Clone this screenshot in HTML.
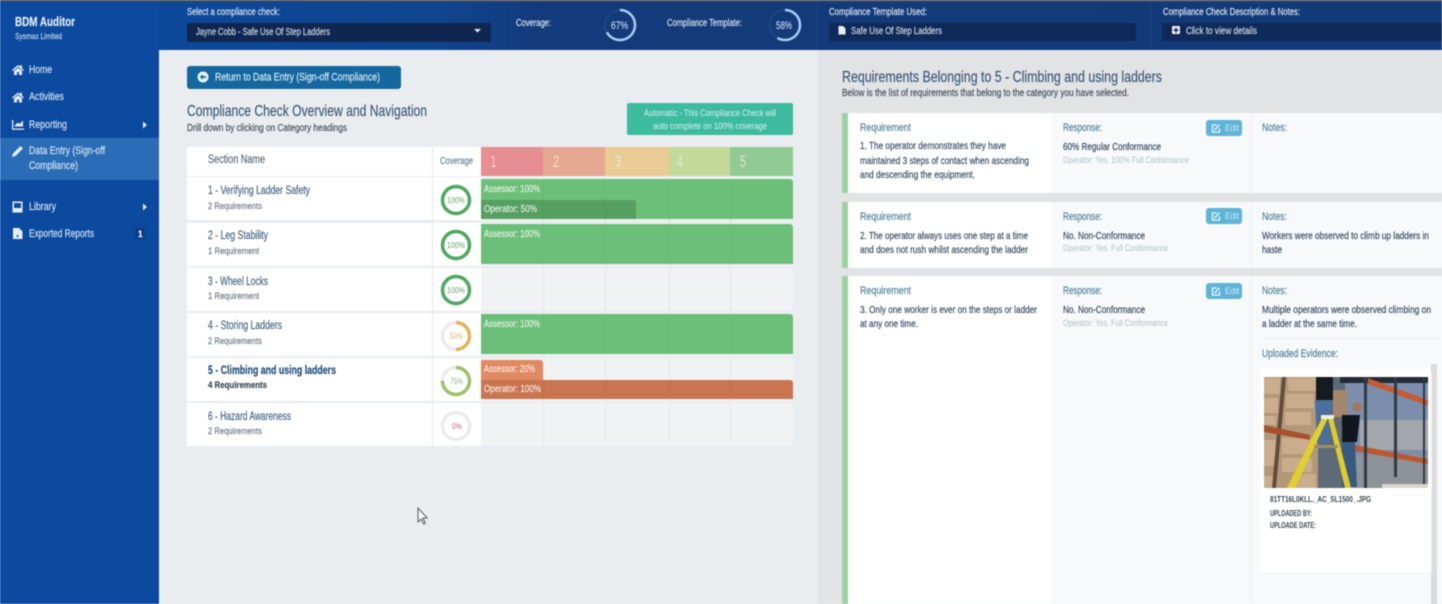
<!DOCTYPE html>
<html><head><meta charset="utf-8"><title>BDM Auditor</title>
<style>
html,body{margin:0;padding:0;background:#e9edef;width:1442px;height:604px;overflow:hidden}
svg{display:block;filter:blur(.4px)}
text{font-family:"Liberation Sans",sans-serif;font-size:10px;fill:var(--c);stroke:var(--c);stroke-width:.16}
.s{--c:#d5e3f3;font-size:11px}.h{--c:#dbe6f3;font-size:10px}.d{--c:#33475f;font-size:10.5px}
.t{--c:#41607f;font-size:11.5px}.q{--c:#6b7680;font-size:9.5px}
.b{--c:#e6f2e8;font-size:10px}.l{--c:#4f7f96;font-size:11px}.g{--c:#b4bec2;font-size:9.5px;stroke-width:0}
.n{--c:#f6e9e4;font-size:16.5px;opacity:.8;stroke-width:0}
.w{--c:#d5dfea;font-size:10.5px}
.bb{font-weight:bold}
.ev{--c:#3a4650;font-size:8px;font-weight:bold;stroke-width:0}
</style></head><body>
<svg xmlns="http://www.w3.org/2000/svg" width="1442" height="604" viewBox="0 0 1442 604">
<defs>
<linearGradient id="hd" x1="0" x2="1" y1="0" y2="0"><stop offset="0" stop-color="#0b4a9e"/><stop offset=".3" stop-color="#0f4590"/><stop offset=".38" stop-color="#133a7a"/><stop offset="1" stop-color="#133a78"/></linearGradient>
</defs>
<rect width="1442" height="604" fill="#e9edef"/>
<rect x="818" y="50" width="624" height="554" fill="#e1e3e5"/>
<rect width="1442" height="50" fill="url(#hd)"/>
<rect width="1442" height="2" fill="#3c4a63"/>
<rect x="0" y="0" width="159" height="604" fill="#0b4a9e"/>
<rect width="159" height="2" fill="#3c4a63"/>
<rect x="505" y="2" width="1" height="48" fill="#173f7e"/><rect x="655" y="2" width="1" height="48" fill="#173f7e"/><rect x="816" y="2" width="1" height="48" fill="#1a4486"/><rect x="1150" y="2" width="1" height="48" fill="#1a4486"/>

<!-- Sidebar -->
<rect x="0" y="138" width="159" height="42" fill="#2a6db6"/>
<g fill="#e4edf7">
<path d="M12 70l6-5 2 1.700v-1.500h2v3l2 2-1 .8-5-4.200-5 4.200zM14 71l4-3.300 4 3.300v4h-3v-3h-2v3h-3z"/>
<path d="M12 97.500l6-5 2 1.700v-1.500h2v3l2 2-1 .8-5-4.200-5 4.200zM14 98.500l4-3.300 4 3.300v4h-3v-3h-2v3h-3z"/>
<path d="M12 120h1.300v8.500H24v1.300H12zM14.500 126l3-3.500 2 1.500 3.500-3.500v6h-8.500z"/>
<path d="M12 157l1-3.500 7.500-7.500 2.500 2.500-7.500 7.500z"/>
<path d="M12.500 201.500h10v11h-10zM14 203v5h7v-5z"/>
<path d="M13 228h6l3.500 3.500V239H13z"/>
</g>
<circle cx="17.500" cy="236" r="1" fill="#0b4a9e"/>
<path d="M143 121.500l4 3.500-4 3.500zM143 203.500l4 3.500-4 3.500z" fill="#dce8f5"/>
<rect x="135" y="228" width="10" height="11" rx="3" fill="#0d3a7c"/>
<g transform="translate(0,-.8)">
<text x="15" y="27" style="--c:#e4edf7;font-size:12.500px;font-weight:bold" textLength="60" lengthAdjust="spacingAndGlyphs">BDM Auditor</text>
<text x="15" y="40" style="--c:#c5d6ea;font-size:8.500px" textLength="47" lengthAdjust="spacingAndGlyphs">Sysmax Limited</text>
<text x="29" y="74" class="s" textLength="23" lengthAdjust="spacingAndGlyphs">Home</text>
<text x="29" y="101" class="s" textLength="35" lengthAdjust="spacingAndGlyphs">Activities</text>
<text x="29" y="129" class="s" textLength="38" lengthAdjust="spacingAndGlyphs">Reporting</text>
<text x="29" y="155" class="s" textLength="76" lengthAdjust="spacingAndGlyphs">Data Entry (Sign-off</text>
<text x="29" y="170" class="s" textLength="49" lengthAdjust="spacingAndGlyphs">Compliance)</text>
<text x="29" y="211" class="s" textLength="27" lengthAdjust="spacingAndGlyphs">Library</text>
<text x="29" y="238" class="s" textLength="65" lengthAdjust="spacingAndGlyphs">Exported Reports</text>
<text x="137.800" y="238" style="--c:#e4edf7;font-size:9px;font-weight:bold">1</text>

<!-- Header text -->
<text x="187" y="16" class="h" textLength="93" lengthAdjust="spacingAndGlyphs">Select a compliance check:</text>
<text x="516" y="27" class="h" textLength="35" lengthAdjust="spacingAndGlyphs">Coverage:</text>
<text x="667" y="27" class="h" textLength="75" lengthAdjust="spacingAndGlyphs">Compliance Template:</text>
<text x="829" y="16" class="h" textLength="98" lengthAdjust="spacingAndGlyphs">Compliance Template Used:</text>
<text x="1163" y="16" class="h" textLength="137" lengthAdjust="spacingAndGlyphs">Compliance Check Description &amp; Notes:</text>
</g>
<rect x="187" y="23" width="304" height="19" rx="2" fill="#0e2650"/>
<text x="196" y="35" class="w" textLength="134" lengthAdjust="spacingAndGlyphs">Jayne Cobb - Safe Use Of Step Ladders</text>
<path d="M474 29h7l-3.500 3.500z" fill="#e8eef5"/>
<circle cx="620" cy="25" r="15" fill="none" stroke="#1c4484" stroke-width="2.500"/>
<circle cx="620" cy="25" r="15" fill="none" stroke="#a9cdf0" stroke-width="2.500" stroke-dasharray="63 95" transform="rotate(-90 620 25)"/>
<text x="611" y="29" style="--c:#c7d8ec;font-size:11px" textLength="17" lengthAdjust="spacingAndGlyphs">67%</text>
<circle cx="785" cy="25" r="15" fill="none" stroke="#1c4484" stroke-width="2.500"/>
<circle cx="785" cy="25" r="15" fill="none" stroke="#a9cdf0" stroke-width="2.500" stroke-dasharray="55 95" transform="rotate(-90 785 25)"/>
<text x="776" y="29" style="--c:#c7d8ec;font-size:11px" textLength="16" lengthAdjust="spacingAndGlyphs">58%</text>
<rect x="829" y="23" width="307" height="18" fill="#0f2a58"/>
<path d="M838.500 26h4.500l2.500 2.500V34.500h-7z" fill="#e8eef5"/>
<text x="851" y="34" class="w" textLength="91" lengthAdjust="spacingAndGlyphs">Safe Use Of Step Ladders</text>
<rect x="1162" y="23" width="280" height="18" fill="#0f2a58"/>
<rect x="1172" y="26" width="8" height="8" rx="1" fill="#f2f5f8"/><path d="M1175.300 27.500h1.400v2h2v1.400h-2v2h-1.400v-2h-2v-1.400h2z" fill="#0f2a58"/>
<text x="1186" y="34" class="w" textLength="71" lengthAdjust="spacingAndGlyphs">Click to view details</text>

<!-- Left panel -->
<rect x="187" y="66" width="214" height="23" rx="3" fill="#14689f"/>
<circle cx="203" cy="77" r="5.500" fill="#eaf3f9"/><path d="M199.800 77l3-2.700v1.800h3.200v1.800h-3.200v1.800z" fill="#14689f"/>
<text x="215" y="80.500" style="--c:#dcebf5;font-size:11px" textLength="165" lengthAdjust="spacingAndGlyphs">Return to Data Entry (Sign-off Compliance)</text>
<text x="187" y="116" style="--c:#3d5877;font-size:16px" textLength="240" lengthAdjust="spacingAndGlyphs">Compliance Check Overview and Navigation</text>
<text x="187" y="131" style="--c:#3f4c58;font-size:10px" textLength="160" lengthAdjust="spacingAndGlyphs">Drill down by clicking on Category headings</text>
<rect x="627" y="103" width="166" height="32" rx="2" fill="#3dbb9f"/>
<text x="644" y="116" style="--c:#d8f3ec;font-size:9.500px;stroke-width:0" textLength="132" lengthAdjust="spacingAndGlyphs">Automatic - This Compliance Check will</text>
<text x="653" y="129" style="--c:#d8f3ec;font-size:9.500px;stroke-width:0" textLength="114" lengthAdjust="spacingAndGlyphs">auto complete on 100% coverage</text>

<!-- Table -->
<rect x="187" y="147" width="294" height="29" fill="#fff"/>
<rect x="481" y="147" width="62" height="29" fill="#e58f92"/><rect x="543" y="147" width="62" height="29" fill="#e5a890"/><rect x="605" y="147" width="64" height="29" fill="#e8cc94"/><rect x="669" y="147" width="61" height="29" fill="#c3da9a"/><rect x="730" y="147" width="63" height="29" fill="#8fcb92"/>
<text x="491" y="167" class="n" textLength="5" lengthAdjust="spacingAndGlyphs">1</text><text x="553" y="167" class="n" textLength="6" lengthAdjust="spacingAndGlyphs">2</text><text x="615" y="167" class="n" textLength="6" lengthAdjust="spacingAndGlyphs">3</text><text x="677" y="167" class="n" textLength="6" lengthAdjust="spacingAndGlyphs">4</text><text x="740" y="167" class="n" textLength="6" lengthAdjust="spacingAndGlyphs">5</text>

<g fill="#fff"><rect x="187" y="177" width="294" height="43"/><rect x="187" y="223" width="294" height="43"/><rect x="187" y="268" width="294" height="43"/><rect x="187" y="313" width="294" height="43"/><rect x="187" y="358" width="294" height="43"/><rect x="187" y="403" width="294" height="43"/></g>
<g fill="#f0f2f4"><rect x="481" y="177" width="312" height="43"/><rect x="481" y="223" width="312" height="43"/><rect x="481" y="268" width="312" height="43"/><rect x="481" y="313" width="312" height="43"/><rect x="481" y="358" width="312" height="43"/><rect x="481" y="403" width="312" height="43"/></g>
<path d="M432.500 147V446M543.500 177V446M605.500 177V446M669.500 177V446M730.500 177V446" stroke="#e5e7e9" stroke-width="1"/>

<g transform="translate(0,-.8)">
<text x="208" y="164" style="--c:#5b6872;font-size:11.500px" textLength="57" lengthAdjust="spacingAndGlyphs">Section Name</text>
<text x="440" y="165" style="--c:#5d8291;font-size:10px" textLength="33" lengthAdjust="spacingAndGlyphs">Coverage</text>
<text x="208" y="195" class="t" textLength="102" lengthAdjust="spacingAndGlyphs">1 - Verifying Ladder Safety</text>
<text x="208" y="210" class="q" textLength="54" lengthAdjust="spacingAndGlyphs">2 Requirements</text>
<text x="208" y="240" class="t" textLength="60" lengthAdjust="spacingAndGlyphs">2 - Leg Stability</text>
<text x="208" y="255" class="q" textLength="51" lengthAdjust="spacingAndGlyphs">1 Requirement</text>
<text x="208" y="286" class="t" textLength="60" lengthAdjust="spacingAndGlyphs">3 - Wheel Locks</text>
<text x="208" y="300" class="q" textLength="51" lengthAdjust="spacingAndGlyphs">1 Requirement</text>
<text x="208" y="330" class="t" textLength="74" lengthAdjust="spacingAndGlyphs">4 - Storing Ladders</text>
<text x="208" y="345" class="q" textLength="54" lengthAdjust="spacingAndGlyphs">2 Requirements</text>
<text x="208" y="375" class="t bb" style="--c:#1f4a7d" textLength="128" lengthAdjust="spacingAndGlyphs">5 - Climbing and using ladders</text>
<text x="208" y="389" class="q bb" style="--c:#3b4650" textLength="59" lengthAdjust="spacingAndGlyphs">4 Requirements</text>
<text x="208" y="421" class="t" textLength="83" lengthAdjust="spacingAndGlyphs">6 - Hazard Awareness</text>
<text x="208" y="435" class="q" textLength="54" lengthAdjust="spacingAndGlyphs">2 Requirements</text>
</g>

<g fill="none" stroke-width="3.500">
<circle cx="456" cy="200" r="13.500" stroke="#4ea85f"/>
<circle cx="456" cy="245" r="13.500" stroke="#4ea85f"/>
<circle cx="456" cy="290" r="13.500" stroke="#4ea85f"/>
<circle cx="456" cy="336" r="13.500" stroke="#ececee"/>
<circle cx="456" cy="336" r="13.500" stroke="#e0b55a" stroke-dasharray="42.400 85" transform="rotate(-90 456 336)"/>
<circle cx="456" cy="381" r="13.500" stroke="#ececee"/>
<circle cx="456" cy="381" r="13.500" stroke="#9cc26a" stroke-dasharray="63.600 85" transform="rotate(-90 456 381)"/>
<circle cx="456" cy="426" r="13.500" stroke="#ececee"/>
</g>
<text x="447" y="203" style="--c:#5fa26c;font-size:8px;stroke-width:0" textLength="18" lengthAdjust="spacingAndGlyphs">100%</text>
<text x="447" y="248" style="--c:#5fa26c;font-size:8px;stroke-width:0" textLength="18" lengthAdjust="spacingAndGlyphs">100%</text>
<text x="447" y="293" style="--c:#5fa26c;font-size:8px;stroke-width:0" textLength="18" lengthAdjust="spacingAndGlyphs">100%</text>
<text x="450" y="339" style="--c:#d9b66c;font-size:8px;stroke-width:0" textLength="13" lengthAdjust="spacingAndGlyphs">50%</text>
<text x="450" y="384" style="--c:#9aa88a;font-size:8px;stroke-width:0" textLength="13" lengthAdjust="spacingAndGlyphs">75%</text>
<text x="452" y="429" style="--c:#c9626a;font-size:8px;stroke-width:0" textLength="10" lengthAdjust="spacingAndGlyphs">0%</text>

<path d="M481 179h309a3 3 0 0 1 3 3v37H481z" fill="#6cbf78"/>
<path d="M481 200h152a3 3 0 0 1 3 3v16H481z" fill="#559f60"/>
<path d="M481 224h309a3 3 0 0 1 3 3v37H481z" fill="#6cbf78"/>
<path d="M481 314h309a3 3 0 0 1 3 3v37H481z" fill="#6cbf78"/>
<path d="M481 360h59a3 3 0 0 1 3 3v17h-62z" fill="#e08a62"/>
<path d="M481 380h309a3 3 0 0 1 3 3v16H481z" fill="#c87550"/>
<path d="M543.500 179V264M605.500 179V264M669.500 179V264M730.500 179V264M543.500 314V354M605.500 314V354M669.500 314V354M730.500 314V354M543.500 380V399M605.500 380V399M669.500 380V399M730.500 380V399" stroke="#000" stroke-opacity=".035"/>
<text x="484" y="192" class="b" textLength="56" lengthAdjust="spacingAndGlyphs">Assessor: 100%</text>
<text x="484" y="212" class="b" textLength="53" lengthAdjust="spacingAndGlyphs">Operator: 50%</text>
<text x="484" y="237" class="b" textLength="56" lengthAdjust="spacingAndGlyphs">Assessor: 100%</text>
<text x="484" y="327" class="b" textLength="56" lengthAdjust="spacingAndGlyphs">Assessor: 100%</text>
<text x="484" y="372" class="b" style="--c:#fbe9e0" textLength="51" lengthAdjust="spacingAndGlyphs">Assessor: 20%</text>
<text x="484" y="392" class="b" style="--c:#fbe9e0" textLength="57" lengthAdjust="spacingAndGlyphs">Operator: 100%</text>

<!-- Cursor -->
<path d="M418 508v14l3.200-3 2.300 5 1.800-.8-2.300-5 4.200-.2z" fill="#f4f5f6" stroke="#333" stroke-width=".8"/>

<!-- Right panel -->
<text x="842" y="82" style="--c:#3d5877;font-size:16px" textLength="320" lengthAdjust="spacingAndGlyphs">Requirements Belonging to 5 - Climbing and using ladders</text>
<text x="842" y="96" style="--c:#3f4c58;font-size:10px" textLength="287" lengthAdjust="spacingAndGlyphs">Below is the list of requirements that belong to the category you have selected.</text>

<g>
<rect x="842" y="113" width="600" height="80" fill="#f7f9fa"/><rect x="842" y="202" width="600" height="66" fill="#f7f9fa"/><rect x="842" y="276" width="600" height="328" fill="#f7f9fa"/>
<rect x="842" y="113" width="210" height="80" fill="#fff"/><rect x="842" y="202" width="210" height="66" fill="#fff"/><rect x="842" y="276" width="210" height="328" fill="#fff"/>
<rect x="842" y="113" width="6" height="80" fill="#9dd3a0"/><rect x="842" y="202" width="6" height="66" fill="#9dd3a0"/><rect x="842" y="276" width="6" height="328" fill="#9dd3a0"/>
<path d="M1251.500 113V193M1251.500 202V268M1251.500 276V604" stroke="#eceef0"/>
</g>

<text x="860" y="131" class="l" textLength="51" lengthAdjust="spacingAndGlyphs">Requirement</text>
<text x="860" y="149" class="d" textLength="146" lengthAdjust="spacingAndGlyphs">1. The operator demonstrates they have</text>
<text x="860" y="164" class="d" textLength="169" lengthAdjust="spacingAndGlyphs">maintained 3 steps of contact when ascending</text>
<text x="860" y="178" class="d" textLength="115" lengthAdjust="spacingAndGlyphs">and descending the equipment.</text>
<text x="1063" y="131" class="l" textLength="39" lengthAdjust="spacingAndGlyphs">Response:</text>
<text x="1063" y="150" class="d" textLength="98" lengthAdjust="spacingAndGlyphs">60% Regular Conformance</text>
<text x="1063" y="163" class="g" textLength="126" lengthAdjust="spacingAndGlyphs">Operator: Yes. 100% Full Conformance</text>
<text x="1262" y="131" class="l" textLength="25" lengthAdjust="spacingAndGlyphs">Notes:</text>

<text x="860" y="220" class="l" textLength="51" lengthAdjust="spacingAndGlyphs">Requirement</text>
<text x="860" y="239" class="d" textLength="168" lengthAdjust="spacingAndGlyphs">2. The operator always uses one step at a time</text>
<text x="860" y="253" class="d" textLength="168" lengthAdjust="spacingAndGlyphs">and does not rush whilst ascending the ladder</text>
<text x="1063" y="220" class="l" textLength="39" lengthAdjust="spacingAndGlyphs">Response:</text>
<text x="1063" y="239" class="d" textLength="82" lengthAdjust="spacingAndGlyphs">No. Non-Conformance</text>
<text x="1063" y="251" class="g" textLength="105" lengthAdjust="spacingAndGlyphs">Operator: Yes. Full Conformance</text>
<text x="1262" y="220" class="l" textLength="25" lengthAdjust="spacingAndGlyphs">Notes:</text>
<text x="1262" y="239" class="d" textLength="167" lengthAdjust="spacingAndGlyphs">Workers were observed to climb up ladders in</text>
<text x="1262" y="253" class="d" textLength="20" lengthAdjust="spacingAndGlyphs">haste</text>

<text x="860" y="294" class="l" textLength="51" lengthAdjust="spacingAndGlyphs">Requirement</text>
<text x="860" y="313" class="d" textLength="177" lengthAdjust="spacingAndGlyphs">3. Only one worker is ever on the steps or ladder</text>
<text x="860" y="327" class="d" textLength="58" lengthAdjust="spacingAndGlyphs">at any one time.</text>
<text x="1063" y="294" class="l" textLength="39" lengthAdjust="spacingAndGlyphs">Response:</text>
<text x="1063" y="313" class="d" textLength="82" lengthAdjust="spacingAndGlyphs">No. Non-Conformance</text>
<text x="1063" y="326" class="g" textLength="105" lengthAdjust="spacingAndGlyphs">Operator: Yes. Full Conformance</text>
<text x="1262" y="294" class="l" textLength="25" lengthAdjust="spacingAndGlyphs">Notes:</text>
<text x="1262" y="313" class="d" textLength="169" lengthAdjust="spacingAndGlyphs">Multiple operators were observed climbing on</text>
<text x="1262" y="327" class="d" textLength="95" lengthAdjust="spacingAndGlyphs">a ladder at the same time.</text>
<rect x="1262" y="338" width="176" height="1" fill="#e6e8ea"/>
<text x="1262" y="357" class="l" textLength="76" lengthAdjust="spacingAndGlyphs">Uploaded Evidence:</text>

<!-- Edit buttons -->
<g fill="#5eb4d6"><rect x="1206" y="120" width="36" height="16" rx="3"/><rect x="1206" y="208" width="36" height="16" rx="3"/><rect x="1206" y="283" width="36" height="16" rx="3"/></g>
<g fill="none" stroke="#eaf6fb" stroke-width="1.300"><path d="M1217 125h-4.500v7h7v-3.500"/><path d="M1214.500 130l5-5"/><path d="M1217 213h-4.500v7h7v-3.500"/><path d="M1214.500 218l5-5"/><path d="M1217 288h-4.500v7h7v-3.500"/><path d="M1214.500 293l5-5"/></g>
<text x="1225" y="131" style="--c:#cfe9f4;font-size:9.500px;stroke-width:0" textLength="14" lengthAdjust="spacingAndGlyphs">Edit</text>
<text x="1225" y="219" style="--c:#cfe9f4;font-size:9.500px;stroke-width:0" textLength="14" lengthAdjust="spacingAndGlyphs">Edit</text>
<text x="1225" y="294" style="--c:#cfe9f4;font-size:9.500px;stroke-width:0" textLength="14" lengthAdjust="spacingAndGlyphs">Edit</text>

<!-- Evidence card -->
<rect x="1431" y="364" width="6" height="240" fill="#d9dbdd"/>
<rect x="1261" y="370" width="171" height="204" rx="3" fill="#eceef0"/>
<rect x="1260" y="369" width="171" height="204" rx="3" fill="#fff"/>
<g>
<rect x="1264" y="377" width="164" height="111" fill="#5d6a78"/>
<!-- boxes on left -->
<rect x="1264" y="377" width="54" height="111" fill="#b39878"/>
<g fill="#c9ad8c"><rect x="1264" y="378" width="16" height="16"/><rect x="1288" y="378" width="28" height="13"/><rect x="1264" y="398" width="14" height="15"/><rect x="1286" y="394" width="28" height="14"/><rect x="1264" y="416" width="12" height="9"/><rect x="1285" y="412" width="26" height="13"/><rect x="1264" y="440" width="12" height="26"/><rect x="1282" y="438" width="30" height="16"/><rect x="1282" y="458" width="30" height="14"/><rect x="1264" y="476" width="10" height="12"/><rect x="1292" y="474" width="24" height="14"/></g>
<g fill="#5f4c3d"><path d="M1282 377h4l-10 111h-4z"/></g>
<path d="M1264 425l46 10v5l-46-8z" fill="#a8512f"/>
<!-- right wall -->
<rect x="1345" y="377" width="83" height="111" fill="#7c8eac"/>
<rect x="1360" y="420" width="68" height="30" fill="#a3a6aa"/>
<rect x="1345" y="455" width="83" height="33" fill="#8e9397"/>
<rect x="1340" y="377" width="88" height="6" fill="#242b34"/>
<path d="M1368 378l60 22v6l-60-22z" fill="#c55a33"/>
<path d="M1355 445l73 14v5l-73-13z" fill="#bb5830"/>
<g fill="#2f3a47"><rect x="1364" y="377" width="3" height="111"/><rect x="1394" y="377" width="3" height="100"/><rect x="1423" y="377" width="2" height="111"/></g>
<rect x="1382" y="484" width="46" height="4" fill="#d9d3c8"/>
<!-- people -->
<rect x="1316" y="377" width="17" height="23" fill="#161b22"/>
<path d="M1315 400h17l-2 43h-13z" fill="#4a6f9c"/>
<rect x="1333" y="390" width="14" height="27" fill="#a5886b"/>
<circle cx="1357" cy="407" r="5" fill="#a07a5f"/>
<path d="M1342 415h18l-3 27h-15z" fill="#12171d"/>
<path d="M1342 442h13l2 45h-15z" fill="#365a82"/>
<!-- ladder -->
<path d="M1322 418h6l-33 70h-8z" fill="#e3cf2a"/>
<path d="M1328 418h5l18 70h-6z" fill="#dfcb2c"/>
<rect x="1321" y="415" width="13" height="4" fill="#eeeedd"/>
<rect x="1314" y="445" width="24" height="3" fill="#9d9068"/>
</g>
<text x="1270" y="502" class="ev" textLength="101" lengthAdjust="spacingAndGlyphs">81TT16L0KLL._AC_SL1500_.JPG</text>
<text x="1270" y="516" class="ev" textLength="42" lengthAdjust="spacingAndGlyphs">UPLOADED BY:</text>
<text x="1270" y="528" class="ev" textLength="46" lengthAdjust="spacingAndGlyphs">UPLOADE DATE:</text>
</svg>
</body></html>
